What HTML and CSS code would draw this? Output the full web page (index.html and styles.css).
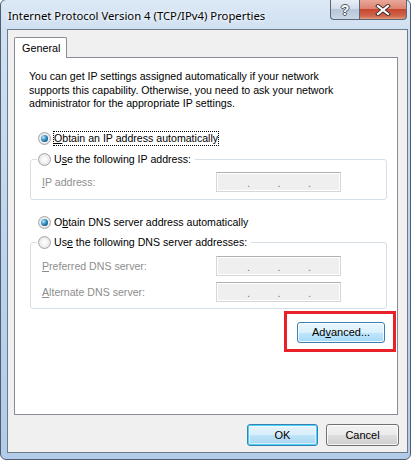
FILE: index.html
```html
<!DOCTYPE html>
<html>
<head>
<meta charset="utf-8">
<link rel="stylesheet" href="styles.css">
</head>
<body>
<div class="window">
  <div class="titlebar">
    <span class="title">Internet Protocol Version 4 (TCP/IPv4) Properties</span>
    <div class="caption-btns">
      <div class="cap help">?</div>
      <div class="cap close">
        <svg width="16" height="12" viewBox="0 0 16 12"><path d="M3 2 L13 10 M13 2 L3 10" stroke="#3b2a28" stroke-width="4" stroke-linecap="square"/><path d="M3 2 L13 10 M13 2 L3 10" stroke="#ffffff" stroke-width="2.2" stroke-linecap="square"/></svg>
      </div>
    </div>
  </div>
  <div class="client">
    <div class="tabs"><div class="tab">General</div></div>
    <div class="panel">
      <p class="intro">You can get IP settings assigned automatically if your network<br>supports this capability. Otherwise, you need to ask your network<br>administrator for the appropriate IP settings.</p>

      <div class="radio-row first"><span class="radio checked"></span><span class="rlabel focus"><u>O</u>btain an IP address automatically</span></div>
      <fieldset class="group g1">
        <legend><span class="radio"></span><span class="rlabel">U<u>s</u>e the following IP address:</span></legend>
        <div class="field-row"><span class="flabel"><u>I</u>P address:</span><div class="ipbox"><span>.</span><span>.</span><span>.</span></div></div>
      </fieldset>

      <div class="radio-row dns"><span class="radio checked"></span><span class="rlabel">O<u>b</u>tain DNS server address automatically</span></div>
      <fieldset class="group g2">
        <legend><span class="radio"></span><span class="rlabel">Us<u>e</u> the following DNS server addresses:</span></legend>
        <div class="field-row"><span class="flabel"><u>P</u>referred DNS server:</span><div class="ipbox"><span>.</span><span>.</span><span>.</span></div></div>
        <div class="field-row second"><span class="flabel"><u>A</u>lternate DNS server:</span><div class="ipbox"><span>.</span><span>.</span><span>.</span></div></div>
      </fieldset>

      <div class="adv-row">
        <div class="highlight"><div class="btn hot">Ad<u>v</u>anced...</div></div>
      </div>
    </div>
    <div class="footer">
      <div class="btn default">OK</div>
      <div class="btn">Cancel</div>
    </div>
  </div>
</div>
</body>
</html>
```

FILE: styles.css
```css
* { box-sizing: border-box; }
html, body { margin: 0; padding: 0; background: #ffffff; }
body { width: 414px; height: 461px; overflow: hidden; font-family: "Liberation Sans", Arial, sans-serif; }

.window {
  width: 411px;
  height: 461px;
  margin-top: -1px;
  border: 1px solid #4e5d70;
  border-radius: 6px;
  background: linear-gradient(180deg, #dce8f5 0px, #cfe0f2 30px, #bcd3ec 60%, #b1cbe9 100%);
  padding: 0 2px 6px 6px;
  display: flex;
  flex-direction: column;
}

.titlebar {
  height: 29px;
  display: flex;
  align-items: flex-start;
  justify-content: space-between;
}
.title {
  font-family: "Noto Sans", sans-serif;
  font-size: 11.3px;
  color: #000;
  margin: 8px 0 0 1px;
  line-height: 15px;
  text-shadow: 0 0 6px #fff, 0 0 3px #fff;
}
.caption-btns {
  display: flex;
  margin-right: 1px;
}
.cap {
  height: 20px;
  border: 1px solid #5b6777;
  border-top: none;
  display: flex;
  align-items: center;
  justify-content: center;
}
.help {
  width: 29px;
  border-right: none;
  border-radius: 0 0 0 4px;
  background: linear-gradient(180deg, #e8eef5 0%, #d3dde9 45%, #b7c6d8 50%, #c9d6e5 100%);
  font-family: "Liberation Sans", sans-serif;
  font-weight: bold;
  font-size: 14px;
  color: #fff;
  text-shadow: -1px 0 #4a5566, 1px 0 #4a5566, 0 -1px #4a5566, 0 1px #4a5566;
}
.close {
  width: 48px;
  border-radius: 0 0 4px 0;
  background: linear-gradient(180deg, #e9a89a 0%, #dd8472 45%, #c7462e 50%, #d0674f 85%, #e39c7a 100%);
}

.client {
  flex: 1;
  background: #f0f0f0;
  border: 1px solid #6f7b89;
  padding: 7px 8px 0 6px;
  display: flex;
  flex-direction: column;
}

.tabs { display: flex; height: 20px; }
.tab {
  width: 53px;
  height: 21px;
  background: #fff;
  border: 1px solid #898c95;
  border-bottom: none;
  border-radius: 2px 2px 0 0;
  font-size: 10.8px;
  line-height: 20px;
  padding-left: 7px;
  position: relative;
  z-index: 1;
}

.panel {
  width: 384px;
  height: 358px;
  background: #fff;
  border: 1px solid #898c95;
  padding: 0;
  font-size: 10.6px;
  color: #000;
}

.intro {
  margin: 12px 0 0 14px;
  line-height: 13.5px;
  white-space: nowrap;
}

u { text-decoration: underline; text-underline-offset: 1px; }

.radio-row {
  display: flex;
  align-items: center;
  height: 15px;
  padding-left: 23px;
}
.radio-row.first { margin-top: 20px; }
.radio-row.dns { margin-top: 15px; }

.radio {
  width: 13px;
  height: 13px;
  border-radius: 50%;
  border: 1px solid #a6a6a6;
  background: radial-gradient(circle at 50% 50%, #ffffff 0%, #f4f4f4 40%, #d6d6d6 100%);
  flex: none;
  position: relative;
}
.radio.checked::after {
  content: "";
  position: absolute;
  left: 2px;
  top: 2px;
  width: 7px;
  height: 7px;
  border-radius: 50%;
  background: radial-gradient(circle at 35% 35%, #bfe8fa 0%, #3d97c9 40%, #135985 75%, #0b3b60 100%);
}
.rlabel {
  margin-left: 3px;
  line-height: 13px;
  white-space: nowrap;
}
.rlabel.focus { outline: 1px dotted #000; outline-offset: 0; }

.group {
  margin: 0 0 0 15px;
  width: 357px;
  border: 1px solid #d5dfe5;
  border-radius: 3px;
  padding: 0;
  min-width: 0;
}
.group legend {
  display: flex;
  align-items: center;
  padding: 0 4px 0 1px;
  margin-left: 6px;
  height: 15px;
}
.g1 { margin-top: 6px; height: 48px; }
.g2 { margin-top: 5px; height: 74px; }

.field-row {
  display: flex;
  align-items: center;
  justify-content: space-between;
  padding: 0 45px 0 11px;
  margin-top: 5px;
  height: 20px;
}
.g2 .field-row { margin-top: 6px; }
.g2 .field-row.second { margin-top: 6px; }
.flabel { color: #8d8d8d; }
.ipbox {
  width: 125px;
  height: 20px;
  background: #efefef;
  border: 1px solid #d6d6d6;
  border-top-color: #b0b0b0;
  display: flex;
  justify-content: space-between;
  padding: 0 29px 0 30px;
  color: #6c7a80;
  font-size: 11px;
  line-height: 20px;
  box-shadow: inset 0 0 0 1px #fff;
}

.adv-row {
  display: flex;
  justify-content: flex-end;
  padding-right: 1px;
  margin-top: 2px;
}
.highlight {
  border: 3px solid #e8202a;
  padding: 8px 8px 6px 10px;
}

.btn {
  height: 21px;
  border: 1px solid #707070;
  border-radius: 3px;
  background: linear-gradient(180deg, #f2f2f2 0%, #ebebeb 50%, #dddddd 51%, #cfcfcf 100%);
  box-shadow: inset 0 0 0 1px rgba(255,255,255,0.8);
  font-size: 11px;
  display: flex;
  align-items: center;
  justify-content: center;
  color: #000;
}
.highlight .btn { width: 88px; height: 21px; }
.btn.hot {
  border-color: #3c7fb1;
  background: linear-gradient(180deg, #eaf6fd 0%, #d9f0fc 50%, #bee6fd 51%, #a7d9f5 100%);
}

.footer {
  display: flex;
  justify-content: flex-end;
  gap: 8px;
  margin-top: 9px;
}
.footer .btn { width: 73px; height: 22px; }
.footer .btn.default {
  width: 71px;
  border-color: #3c7fb1;
  box-shadow: inset 0 0 0 1px #48d3fb, inset 0 0 0 2px rgba(255,255,255,0.5);
  background: linear-gradient(180deg, #e5f4fc 0%, #d8eefa 50%, #bde4f8 51%, #a9d6f0 100%);
}
```
